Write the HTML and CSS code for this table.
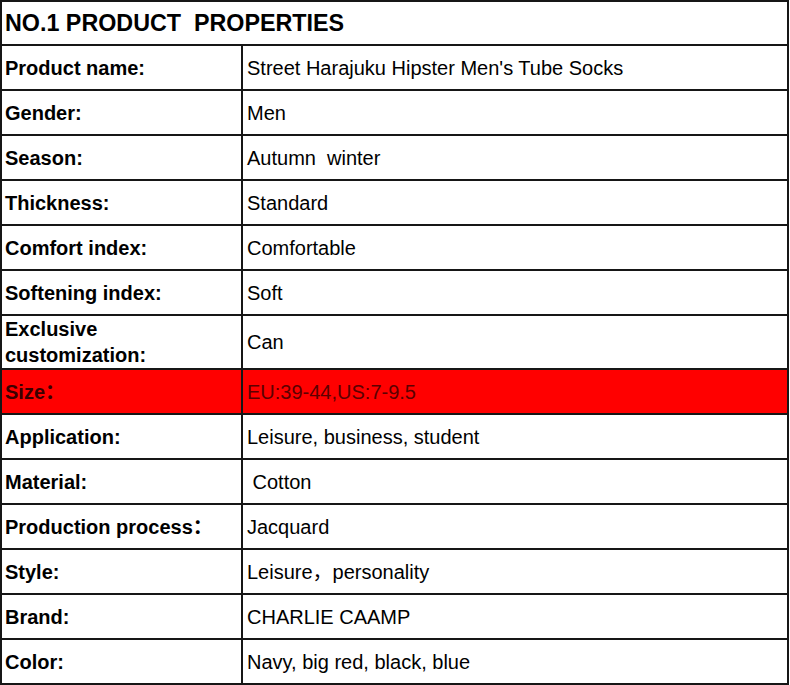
FILE: index.html
```html
<!DOCTYPE html>
<html>
<head>
<meta charset="utf-8">
<link rel="stylesheet" href="styles.css">
</head>
<body>
<table class="props">
  <colgroup><col class="c1"><col class="c2"></colgroup>
  <tr class="head"><td colspan="2">NO.1 PRODUCT&nbsp; PROPERTIES</td></tr>
  <tr><td class="k">Product name:</td><td class="v">Street Harajuku Hipster Men's Tube Socks</td></tr>
  <tr><td class="k">Gender:</td><td class="v">Men</td></tr>
  <tr><td class="k">Season:</td><td class="v">Autumn&nbsp; winter</td></tr>
  <tr><td class="k">Thickness:</td><td class="v">Standard</td></tr>
  <tr><td class="k">Comfort index:</td><td class="v">Comfortable</td></tr>
  <tr><td class="k">Softening index:</td><td class="v">Soft</td></tr>
  <tr class="tall"><td class="k">Exclusive<br>customization:</td><td class="v">Can</td></tr>
  <tr class="hl"><td class="k">Size：</td><td class="v">EU:39-44,US:7-9.5</td></tr>
  <tr><td class="k">Application:</td><td class="v">Leisure, business, student</td></tr>
  <tr><td class="k">Material:</td><td class="v">&nbsp;Cotton</td></tr>
  <tr><td class="k">Production process：</td><td class="v">Jacquard</td></tr>
  <tr><td class="k">Style:</td><td class="v">Leisure，personality</td></tr>
  <tr><td class="k">Brand:</td><td class="v">CHARLIE CAAMP</td></tr>
  <tr><td class="k">Color:</td><td class="v">Navy, big red, black, blue</td></tr>
</table>
</body>
</html>
```
FILE: styles.css
```css
html, body {
  margin: 0;
  padding: 0;
  background: #fff;
}
.props {
  border-collapse: collapse;
  width: 789px;
  table-layout: fixed;
  font-family: "Liberation Sans", Arial, "Noto Sans CJK SC", sans-serif;
  color: #000;
}
.props .c1 {
  width: 241px;
}
.props td {
  border: 2px solid #161616;
  height: 45px;
  padding: 0 4px 0 4px;
  box-sizing: border-box;
  vertical-align: middle;
  font-size: 20px;
  line-height: 26px;
  white-space: nowrap;
}
.props td.k {
  font-weight: bold;
  padding-left: 3px;
}
.props .head td {
  height: 44px;
  font-size: 23.3px;
  font-weight: bold;
  padding-left: 3px;
}
.props .tall td {
  height: 54px;
}
.props .hl td {
  background: #ff0000;
}
.props .hl td.k {
  color: #3a0000;
}
.props .hl td.v {
  color: #5c0000;
}
```
